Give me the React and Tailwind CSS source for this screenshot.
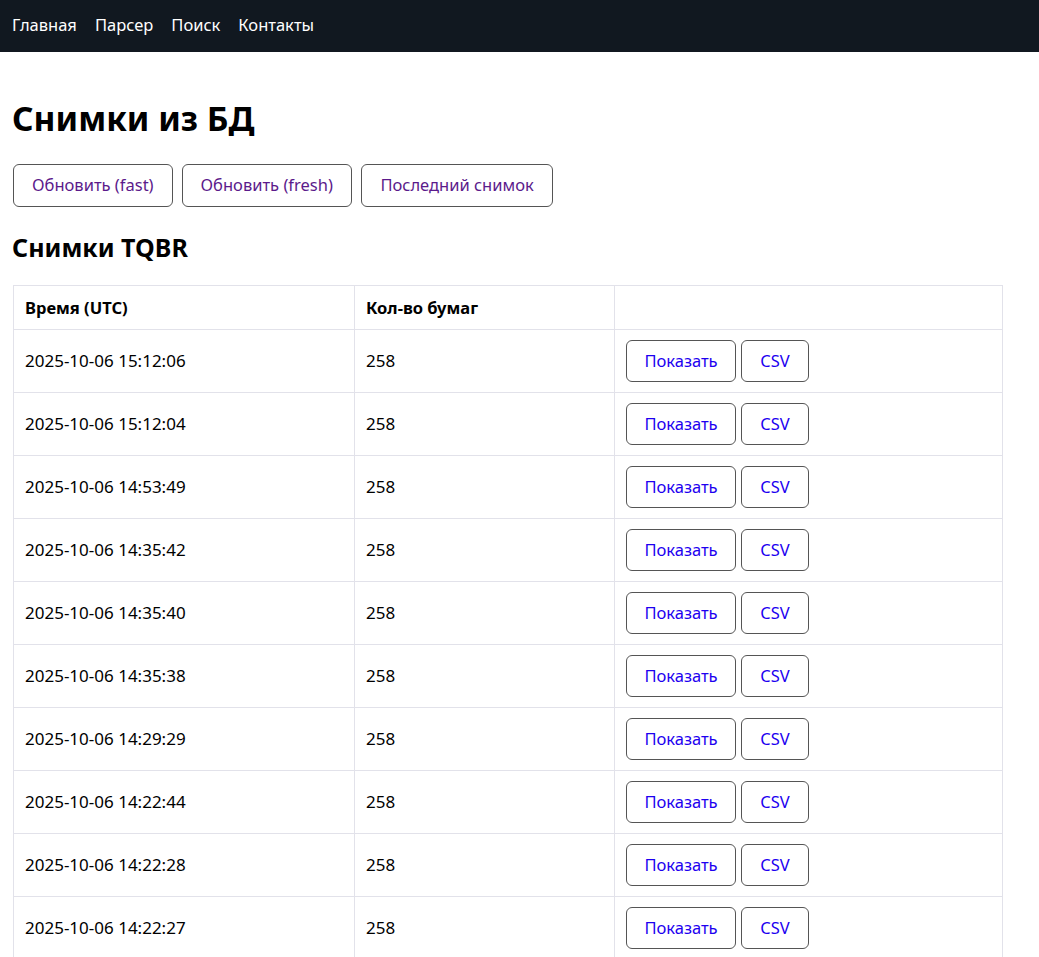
import React from 'react';

const rows = [
  '2025-10-06 15:12:06',
  '2025-10-06 15:12:04',
  '2025-10-06 14:53:49',
  '2025-10-06 14:35:42',
  '2025-10-06 14:35:40',
  '2025-10-06 14:35:38',
  '2025-10-06 14:29:29',
  '2025-10-06 14:22:44',
  '2025-10-06 14:22:28',
  '2025-10-06 14:22:27',
  '2025-10-06 14:22:25',
];

const font = { fontFamily: '"Noto Sans", "Open Sans", sans-serif' };

export default function App() {
  return (
    <div className="min-h-screen bg-white text-black text-[16.5px]" style={font}>
      {/* nav */}
      <nav className="h-[52px] bg-[#111820] flex items-center gap-[18px] px-3 pb-[2px] text-white text-[16.5px]">
        <a>Главная</a>
        <a>Парсер</a>
        <a>Поиск</a>
        <a>Контакты</a>
      </nav>

      <main className="px-3">
        <h1 className="text-[33.5px] font-bold leading-[40px] pt-[46px] pb-[26px]">Снимки из БД</h1>

        <div className="flex gap-[9px] pl-px">
          <button className="h-[43px] px-[18px] border border-[#555] rounded-md text-[#5b1a8b]">Обновить (fast)</button>
          <button className="h-[43px] px-[18px] border border-[#555] rounded-md text-[#5b1a8b]">Обновить (fresh)</button>
          <button className="h-[43px] px-[18.5px] border border-[#555] rounded-md text-[#5b1a8b]">Последний снимок</button>
        </div>

        <h2 className="text-[25px] font-bold leading-[30px] mt-[25px] mb-[23px]">Снимки TQBR</h2>

        <table className="w-[990px] ml-px border-collapse">
          <thead>
            <tr>
              <th className="w-[341px] text-left font-bold px-[11px] py-[9.5px] border border-[#e2e2ea] leading-6">Время (UTC)</th>
              <th className="w-[260px] text-left font-bold px-[11px] py-[9.5px] border border-[#e2e2ea] leading-6">Кол-во бумаг</th>
              <th className="text-left px-[11px] py-[9.5px] border border-[#e2e2ea] leading-6"></th>
            </tr>
          </thead>
          <tbody>
            {rows.map((t) => (
              <tr key={t}>
                <td className="px-[11px] py-2.5 border border-[#e2e2ea] text-[17px]">{t}</td>
                <td className="px-[11px] py-2.5 border border-[#e2e2ea] text-[17px]">258</td>
                <td className="px-[11px] py-2.5 border border-[#e2e2ea]">
                  <div className="flex gap-[5px]">
                    <button className="h-[42px] w-[110px] border border-[#555] rounded-md text-[#1d00f0]">Показать</button>
                    <button className="h-[42px] w-[68px] border border-[#555] rounded-md text-[#1d00f0]">CSV</button>
                  </div>
                </td>
              </tr>
            ))}
          </tbody>
        </table>
      </main>
    </div>
  );
}
